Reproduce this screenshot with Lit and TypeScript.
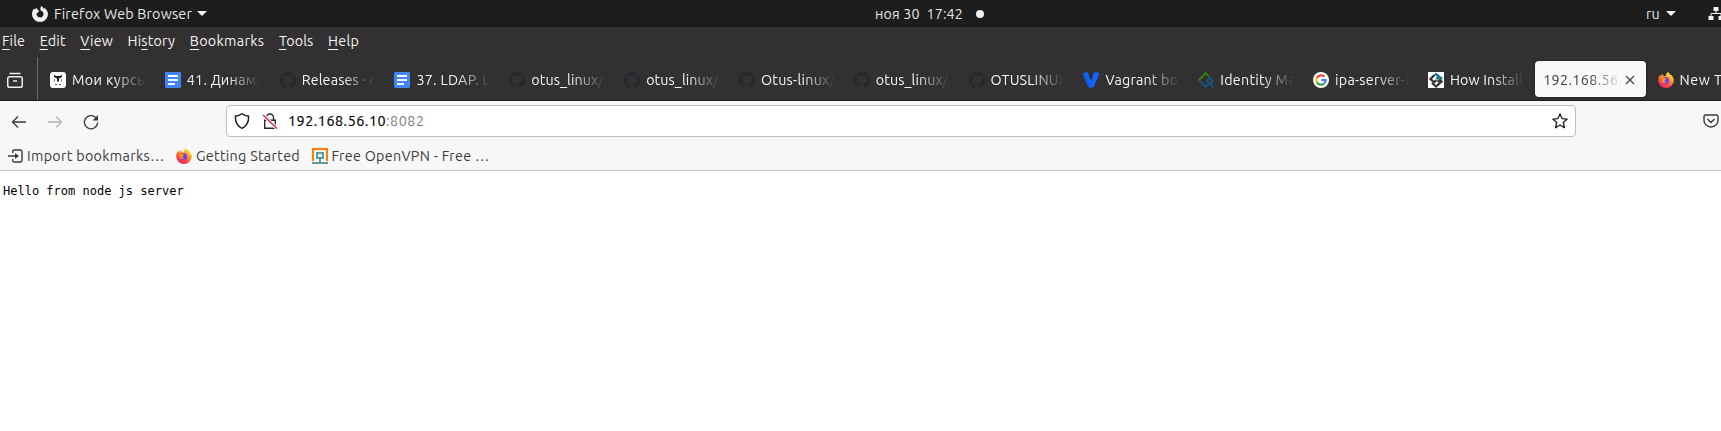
import { LitElement, html, css, svg, nothing } from "lit";
import { customElement, property } from "lit/decorators.js";

const icon = (body: unknown, size = 16, cls = "") =>
  html`<svg class="icon ${cls}" width=${size} height=${size} viewBox="0 0 16 16">${body}</svg>`;

const github = icon(svg`<path fill="#24292e" fill-rule="evenodd" d="M8 0C3.58 0 0 3.58 0 8c0 3.54 2.29 6.53 5.47 7.59.4.07.55-.17.55-.38 0-.19-.01-.82-.01-1.49-2.01.37-2.53-.49-2.69-.94-.09-.23-.48-.94-.82-1.13-.28-.15-.68-.52-.01-.53.63-.01 1.08.58 1.23.82.72 1.21 1.87.87 2.33.66.07-.52.28-.87.51-1.07-1.78-.2-3.64-.89-3.64-3.95 0-.87.31-1.59.82-2.15-.08-.2-.36-1.02.08-2.12 0 0 .67-.21 2.2.82A7.6 7.6 0 0 1 8 3.87c.68 0 1.36.09 2 .27 1.53-1.04 2.2-.82 2.2-.82.44 1.1.16 1.92.08 2.12.51.56.82 1.27.82 2.15 0 3.07-1.87 3.75-3.65 3.95.29.25.54.73.54 1.48 0 1.07-.01 1.93-.01 2.2 0 .21.15.46.55.38A8.01 8.01 0 0 0 16 8c0-4.42-3.58-8-8-8z"/>`);
const docs = icon(svg`<rect width="16" height="16" rx="1.4" fill="#4285f4"/><path d="M3 4h10M3 8h10M3 12h7" stroke="#fff" stroke-width="2"/>`);
const owl = icon(svg`<rect width="16" height="16" rx="3" fill="#fff"/><path d="M4 3l2.500 1h3L12 3v2L9 6.500V9H7V6.500L4 5z" fill="#222"/><path d="M4.500 7v3M11.500 7v3M7 9.500h2" stroke="#888"/><path d="M5 12.500h2M9 12.500h2" stroke="#555"/>`);
const vagrant = icon(svg`<path fill="#1563ff" d="M0 1l3.500-1L5.500 1v1.500L8 9l2.500-6.500V1l2-1L16 1v2l-5.400 12L8 16l-2.600-1L0 3z"/><path fill="#1258dc" d="M0 1l2.500 1v2L8 16l-2.600-1L0 3z"/>`);
const freeipa = icon(svg`<g fill="none" stroke-width="1.600"><path d="M1 8l6.500-7L11 4.500" stroke="#3f8410"/><path d="M1 8l6.500 7 3-3" stroke="#0d5f8a"/><path d="M15.500 15.500L9 9l3-3.300L15 9l-3 3" stroke="#0d5f8a"/><path d="M1 8l3-3" stroke="#3f8410"/></g>`);
const google = icon(svg`<circle cx="8" cy="8" r="8" fill="#fff"/><g fill="none" stroke-width="2.200"><path d="M11.500 4.800A4.700 4.700 0 0 0 3.900 5.700" stroke="#ea4335"/><path d="M3.900 5.700a4.700 4.700 0 0 0 0 4.600" stroke="#fbbc05"/><path d="M3.900 10.300a4.700 4.700 0 0 0 7.100 1.300" stroke="#34a853"/><path d="M11 11.600A4.700 4.700 0 0 0 12.700 8H8.200" stroke="#4285f4"/></g>`);
const howto = icon(svg`<path fill="#fff" d="M0 0h16v16H0z"/><g fill="none" stroke-width="2.300"><path d="M6.500 3L2.500 7l3.500 3.300L8.300 8" stroke="#333436"/><path d="M7 1.500L14 7M11.500 4.500L8.500 7" stroke="#0e7490"/><path d="M4 11l4 3.500 5.500-5-1.800-1.500L9.500 10" stroke="#333436"/></g>`);
const firefox = icon(svg`<defs><linearGradient id="ff" x1=".85" y1="0" x2=".25" y2="1"><stop offset="0" stop-color="#fff04a"/><stop offset=".35" stop-color="#ffb02a"/><stop offset=".65" stop-color="#ff5634"/><stop offset="1" stop-color="#f0157e"/></linearGradient></defs><path fill="url(#ff)" d="M10 0c1 .7 1.800 2 2.200 3.200l.5-.8c1.800 1.500 3.100 3.700 3.100 6A7.700 7.700 0 0 1 8 16 7.700 7.700 0 0 1 .2 8.300C.2 6 1 4 2.300 2.600l.5 1.300C3.500 3 4.500 2.300 5.300 2l-.2 1.700c1 0 2 .2 2.700.6C7.700 2.600 8.600 1 10 0z"/><circle cx="7.800" cy="8.600" r="3.500" fill="#7542e5"/><path fill="#ff980e" d="M3.300 6.200c1-.8 2.500-.6 3.300 0l1.700.3c0 .9-1.300 1.100-1.700 1.900-.3 1 .6 1.800 1.900 1.500-1.900 1.700-4.700.6-5-1.500z"/>`);
const ovpn = icon(svg`<path d="M1 13V1h14v12" fill="none" stroke="#ff7b0a" stroke-width="2"/><path d="M5 5h6v5H5zM8 10v5M0 15h16" fill="none" stroke="#5f9a9c" stroke-width="2"/>`);
const ffmono = icon(svg`<path fill="#f2f2f2" fill-rule="evenodd" d="M9.500 0c1.200.8 1.900 1.800 2.200 3l.7-1C14.500 3.300 16 5.700 16 8.200A7.900 7.900 0 0 1 8 16 7.900 7.900 0 0 1 0 8.200C0 5.800 1 3.500 2.200 2.400l.5 1.200C3.500 2.800 4.500 2.200 5.400 2l-.2 1.800 1.800.4-.8 2.200-1.500.7c-.5 2.600 1.200 4.400 3.300 4.400 2.300 0 3.900-1.800 3.500-4-.3-1.600-1.400-2.500-2.600-3C8 3.500 8.300 1.200 9.500 0z"/>`);

/** A single line of text whose tracking is adjusted to a target width. */
@customElement("fit-text")
export class FitText extends LitElement {
  @property({ type: Number }) w = 0;
  static styles = css`
    :host { display: inline-block; white-space: pre; }
  `;
  render() {
    return html`<span><slot></slot></span>`;
  }
  firstUpdated() {
    const fit = () => {
      const n = (this.textContent ?? "").length;
      this.style.letterSpacing = "0px";
      const natural = this.getBoundingClientRect().width;
      if (this.w && n) this.style.letterSpacing = (this.w - natural) / n + "px";
    };
    fit();
    document.fonts?.ready.then(fit);
  }
}

const tabs = [
  { icon: owl, text: "Мои курсы", w: 76 },
  { icon: docs, text: "41. Динамич", w: 86 },
  { icon: github, text: "Releases · dotm", w: 103 },
  { icon: docs, text: "37. LDAP. LD", w: 84 },
  { icon: github, text: "otus_linux/V", w: 82 },
  { icon: github, text: "otus_linux/V", w: 82 },
  { icon: github, text: "Otus-linux/V", w: 84 },
  { icon: github, text: "otus_linux/V", w: 82 },
  { icon: github, text: "OTUSLINUX", w: 77 },
  { icon: vagrant, text: "Vagrant box", w: 80 },
  { icon: freeipa, text: "Identity Man", w: 84 },
  { icon: google, text: "ipa-server-in", w: 82 },
  { icon: howto, text: "How Install", w: 73 },
  { icon: null, text: "192.168.56.10", w: 96, active: true },
  { icon: firefox, text: "New Tab", w: 59 },
];

const menu: [string, string, string, number][] = [
  ["", "F", "ile", 23], ["", "E", "dit", 26], ["", "V", "iew", 32.5], ["Hi", "s", "tory", 47.5],
  ["", "B", "ookmarks", 74.5], ["", "T", "ools", 34.5], ["", "H", "elp", 31],
];

@customElement("app-root")
export class AppRoot extends LitElement {
  static styles = css`
    :host { display: block; width: 100%; height: 431px; overflow: hidden; background: #fff; font: 14.3px/18px "Ubuntu", "Noto Sans", sans-serif; color: #3b3b3d; }
    .icon { display: block; flex: none; overflow: visible; }
    .top { display: grid; grid-template-columns: 875px 1fr auto; height: 27px; align-items: center; background: #1d1d1d; color: #e6e6e6; }
    .group { display: flex; align-items: center; }
    .app { padding-left: 32px; gap: 6px; }
    .app .caret { margin-left: -1px; }
    .clock { gap: 13px; }
    .dot { width: 8px; height: 8px; border-radius: 50%; background: #f2f2f2; }
    .caret { width: 0; border: 5px solid transparent; border-top-color: #f2f2f2; border-bottom: 0; }
    .lang { gap: 6px; }
    .net { margin-left: 26px; width: 13px; overflow: hidden; }
    .menu { display: flex; gap: 14.700px; height: 30px; padding-left: 2px; background: #323031; color: #f3f3f3; align-items: flex-start; }
    .menu fit-text { margin-top: 5px; }
    .menu u { text-underline-offset: 3px; text-decoration-thickness: 1px; }
    .tabbar { display: flex; height: 43px; background: #323031; border-bottom: 1px solid #1c1b1c; color: #f5f5f5; overflow: hidden; }
    .view { width: 38px; border-right: 1px solid #6a696a; display: flex; align-items: center; padding-left: 7px; box-sizing: border-box; flex: none; padding-top: 3px; }
    .tabs { display: flex; flex: none; padding-left: 2.400px; }
    .tab { display: flex; align-items: center; box-sizing: border-box; width: 114.83px; padding: 2px 9.600px 0; gap: 6px; flex: none; }
    .label { flex: 1; min-width: 0; overflow: hidden; white-space: nowrap; mask-image: linear-gradient(to left, transparent, #000 32px); }
    .active { width: 110.83px; margin: 4px 2px 3px; background: #f9f9fb; border-radius: 4px; color: #3b3b3d; box-shadow: 0 0 3px #0008; padding: 2px 8px 0 8px; gap: 0; }
    .nav { display: flex; height: 40px; padding-top: 4px; background: #f7f7f7; box-sizing: border-box; }
    .buttons { display: flex; gap: 20px; padding-left: 11px; width: 226px; box-sizing: border-box; height: 33px; align-items: center; flex: none; }
    .url { display: flex; align-items: center; box-sizing: border-box; width: 1350px; height: 32px; border: 1px solid #bdbdbd; border-radius: 4px; background: #fff; padding: 0 7px; color: #808080; flex: none; }
    .url b { font-weight: 400; color: #000; -webkit-text-stroke: 0.2px #000; }
    .lock { margin: 0 10px 0 12px; }
    .star { margin-left: auto; }
    .pocket { margin: 8px 0 0 127px; }
    .marks { display: flex; height: 30px; background: #f7f7f7; border-bottom: 1px solid #c3c3c3; box-sizing: border-box; padding-left: 8px; }
    .mark { display: flex; align-items: center; height: 30px; gap: 3px; }
    .mark + .mark { margin-left: 11.500px; gap: 4px; }
    .page { margin: 0; padding: 13px 3px; font: 12px/15px "DejaVu Sans Mono", monospace; color: #000; }
  `;
  render() {
    return html`
      <header class="top">
        <div class="group app">${ffmono}<fit-text w="138">Firefox Web Browser</fit-text><i class="caret"></i></div>
        <div class="group clock"><fit-text w="88">ноя 30  17:42</fit-text><i class="dot"></i></div>
        <div class="group lang"><fit-text w="14">ru</fit-text><i class="caret"></i>
          <div class="net">${icon(svg`<path d="M5.500 1h5v4h-5zM.5 10h5v4h-5zM10.500 10h5v4h-5z" fill="#f2f2f2"/><path d="M8 5v3M3 10V7.500h10V10" stroke="#f2f2f2" fill="none"/>`)}</div>
        </div>
      </header>
      <nav class="menu">
        ${menu.map(([a, k, b, w]) => html`<fit-text w=${w}>${a}<u>${k}</u>${b}</fit-text>`)}
      </nav>
      <div class="tabbar">
        <div class="view">${icon(svg`<g fill="none" stroke="#eee" stroke-width="1.500"><rect x=".75" y="4.750" width="14.500" height="10.500" rx="1.800"/><path d="M2.500 1.500h11M6 9h4"/></g>`)}</div>
        <div class="tabs">
          ${tabs.map((t) => html`<div class="tab ${t.active ? "active" : ""}">
            ${t.icon ?? nothing}
            <div class="label"><fit-text w=${t.w}>${t.text}</fit-text></div>
            ${t.active ? icon(svg`<path d="M4 4l8 8M12 4l-8 8" stroke="#3b3b3d" stroke-width="1.100"/>`) : nothing}
          </div>`)}
        </div>
      </div>
      <div class="nav">
        <div class="buttons">
          ${icon(svg`<path d="M15 8H1.500M7 2.500L1.500 8 7 13.500" fill="none" stroke="#3b3b3d" stroke-width="1.300"/>`)}
          ${icon(svg`<path d="M1 8h13.500M9 2.500L14.500 8 9 13.500" fill="none" stroke="#b4b4b5" stroke-width="1.300"/>`)}
          ${icon(svg`<path d="M13.800 5A6.600 6.600 0 1 0 14.600 8.500" fill="none" stroke="#3b3b3d" stroke-width="1.300"/><path d="M15 1v5.500H9.500z" fill="#3b3b3d"/>`)}
        </div>
        <div class="url">
          ${icon(svg`<path d="M8 .7c2 1.500 4.300 2.300 6.600 2.500C14.800 8 13 13 8 15.300 3 13 1.200 8 1.400 3.200 3.700 3 6 2.200 8 .7z" fill="none" stroke="#1c1c1e" stroke-width="1.400"/>`)}
          ${icon(svg`<path d="M4.500 7V4.500a3.500 3.500 0 0 1 7 0V7M2.700 7.200h10.600v8H2.700z" fill="none" stroke="#2c2c2e" stroke-width="1.400"/><path d="M1 2l14 13.500" stroke="#fff" stroke-width="3.400"/><path d="M1 2l14 13.500" stroke="#e22850" stroke-width="1.500"/>`, 16, "lock")}
          <fit-text w="136.5"><b>192.168.56.10</b>:8082</fit-text>
          ${icon(svg`<path d="M8 .9l2.100 4.700 5.100.5-3.900 3.400 1.200 5.200L8 12l-4.500 2.700 1.200-5.200L.8 6.100l5.100-.5z" fill="none" stroke="#1c1c1e" stroke-width="1.300" stroke-linejoin="round"/>`, 16, "star")}
        </div>
        ${icon(svg`<path d="M2.500 2h11a1.500 1.500 0 0 1 1.500 1.500V7.500a7 6.500 0 0 1-14 0V3.500A1.500 1.500 0 0 1 2.500 2zM4.500 6L8 9.500 11.500 6" fill="none" stroke="#3b3b3d" stroke-width="1.400" stroke-linejoin="round"/>`, 16, "pocket")}
      </div>
      <div class="marks">
        <div class="mark">${icon(svg`<path d="M4.700 5V3.500A1.500 1.500 0 0 1 6.200 2h6.300A1.500 1.500 0 0 1 14 3.500v9a1.500 1.500 0 0 1-1.500 1.500H6.200a1.500 1.500 0 0 1-1.500-1.500V11M0 8h9" fill="none" stroke="#3b3b3d" stroke-width="1.400"/><path d="M7 5l4 3-4 3z" fill="#3b3b3d"/>`)}<fit-text w="137.5">Import bookmarks…</fit-text></div>
        <div class="mark">${firefox}<fit-text w="104">Getting Started</fit-text></div>
        <div class="mark">${ovpn}<fit-text w="158">Free OpenVPN - Free …</fit-text></div>
      </div>
      <pre class="page">Hello from node js server</pre>
    `;
  }
}
